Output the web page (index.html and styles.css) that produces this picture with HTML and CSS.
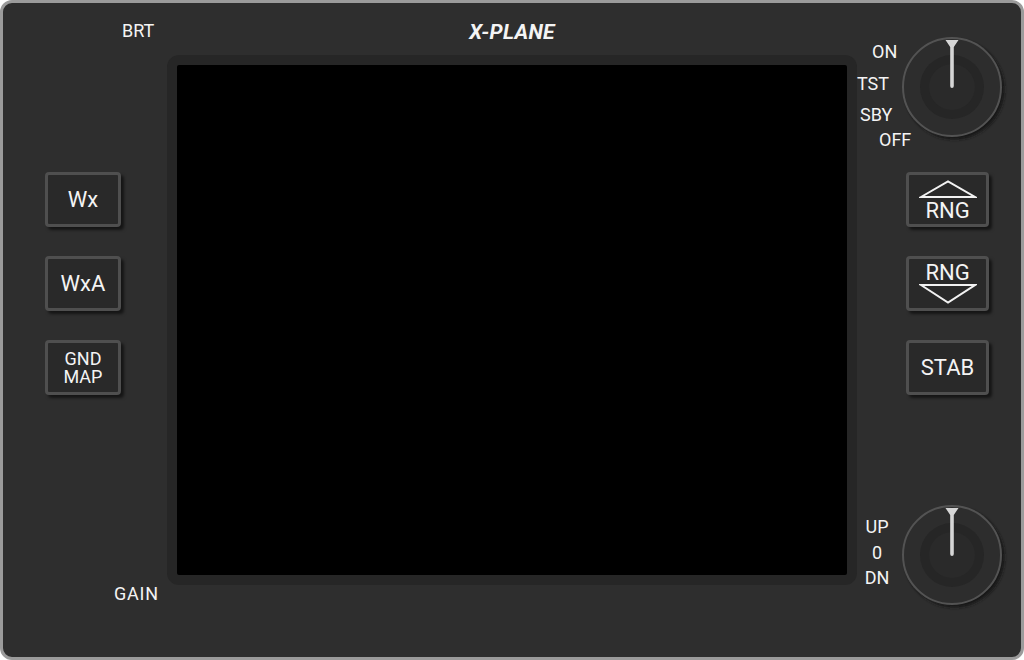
FILE: index.html
```html
<!DOCTYPE html>
<html>
<head>
<meta charset="utf-8">
<title>X-Plane Weather Radar</title>
<link rel="stylesheet" href="styles.css">
</head>
<body>
<div class="panel">
  <div class="col-left">
    <div class="label brt">BRT</div>
    <div class="btn-stack stack-left">
      <div class="btn">Wx</div>
      <div class="btn">WxA</div>
      <div class="btn btn-two"><span>GND</span><span>MAP</span></div>
    </div>
    <div class="label gain">GAIN</div>
  </div>

  <div class="col-center">
    <div class="title">X-PLANE</div>
    <div class="bezel"><div class="screen"></div></div>
  </div>

  <div class="col-right">
    <div class="knob-row">
      <div class="mode-labels">
        <div class="label l-on">ON</div>
        <div class="label l-tst">TST</div>
        <div class="label l-sby">SBY</div>
        <div class="label l-off">OFF</div>
      </div>
      <svg class="knob" viewBox="0 0 106 106" width="106" height="106">
        <defs><filter id="ks" x="-20%" y="-20%" width="140%" height="140%"><feGaussianBlur stdDeviation="1.5"/></filter></defs>
        <circle cx="52.5" cy="52.5" r="50" fill="#141414" filter="url(#ks)"/>
        <circle cx="50" cy="50" r="49" fill="#2d2d2d" stroke="#535353" stroke-width="2"/>
        <circle cx="50" cy="50" r="32" fill="#262626"/>
        <circle cx="50" cy="50" r="23" fill="#2a2a2a"/>
        <path d="M43.5 3 H56.5 L51.8 10 V49 Q51.8 51 50 51 Q48.2 51 48.2 49 V10 Z" fill="#d6d6d6"/>
      </svg>
    </div>

    <div class="btn-stack stack-right">
      <div class="btn btn-rng rng-up">
        <svg class="tri" viewBox="0 0 58 18" width="58" height="18"><polygon points="2,17 29,1.5 56,17" fill="none" stroke="#f2f2f2" stroke-width="2"/></svg>
        <span class="rng-text">RNG</span>
      </div>
      <div class="btn btn-rng rng-down">
        <span class="rng-text">RNG</span>
        <svg class="tri" viewBox="0 0 58 20" width="58" height="20"><polygon points="2,1 29,18.5 56,1" fill="none" stroke="#f2f2f2" stroke-width="2"/></svg>
      </div>
      <div class="btn">STAB</div>
    </div>

    <div class="knob-row tilt-row">
      <div class="tilt-labels">
        <div class="label">UP</div>
        <div class="label">0</div>
        <div class="label">DN</div>
      </div>
      <svg class="knob" viewBox="0 0 106 106" width="106" height="106">
        <defs><filter id="ks2" x="-20%" y="-20%" width="140%" height="140%"><feGaussianBlur stdDeviation="1.5"/></filter></defs>
        <circle cx="52.5" cy="52.5" r="50" fill="#141414" filter="url(#ks2)"/>
        <circle cx="50" cy="50" r="49" fill="#2d2d2d" stroke="#535353" stroke-width="2"/>
        <circle cx="50" cy="50" r="32" fill="#262626"/>
        <circle cx="50" cy="50" r="23" fill="#2a2a2a"/>
        <path d="M43.5 3 H56.5 L51.8 10 V49 Q51.8 51 50 51 Q48.2 51 48.2 49 V10 Z" fill="#d6d6d6"/>
      </svg>
    </div>
  </div>
</div>
</body>
</html>
```

FILE: styles.css
```css
html, body {
  margin: 0;
  padding: 0;
  background: #ffffff;
}

.panel {
  box-sizing: border-box;
  width: 1024px;
  height: 660px;
  border: 3px solid #9b9b9b;
  border-radius: 12px;
  background: #2e2e2e;
  display: flex;
  font-family: Roboto, "Liberation Sans", sans-serif;
  font-weight: 400;
  color: #f4f4f4;
  overflow: hidden;
}

.label {
  font-size: 18px;
  line-height: 18px;
  white-space: nowrap;
}

/* left column */
.col-left {
  box-sizing: border-box;
  width: 164px;
  flex-shrink: 0;
  display: flex;
  flex-direction: column;
  padding-top: 19px;
  padding-bottom: 54px;
}

.brt {
  padding-left: 119px;
}

.gain {
  margin-top: auto;
  padding-left: 111px;
  letter-spacing: 0.8px;
}

.btn-stack {
  display: flex;
  flex-direction: column;
  gap: 29px;
}

.stack-left {
  margin-top: 132px;
  padding-left: 42px;
}

.btn {
  box-sizing: border-box;
  width: 76px;
  height: 55px;
  border: 3px solid #4f4f4f;
  border-radius: 4px;
  background: #292929;
  box-shadow: 3px 3px 3px rgba(0, 0, 0, 0.55);
  display: flex;
  align-items: center;
  justify-content: center;
  font-size: 22px;
  line-height: 22px;
  white-space: nowrap;
}

.btn-two {
  flex-direction: column;
  font-size: 18px;
  line-height: 18px;
}

/* center column */
.col-center {
  box-sizing: border-box;
  width: 690px;
  flex-shrink: 0;
  padding-top: 19px;
}

.title {
  font-style: italic;
  font-weight: 700;
  font-size: 21px;
  line-height: 21px;
  text-align: center;
  letter-spacing: 0.3px;
}

.bezel {
  box-sizing: border-box;
  margin-top: 12px;
  height: 530px;
  padding: 10px;
  border-radius: 12px;
  background: #262626;
}

.screen {
  height: 100%;
  background: #000000;
  border-radius: 2px;
}

/* right column */
.col-right {
  box-sizing: border-box;
  width: 164px;
  flex-shrink: 0;
  padding-top: 34px;
}

.knob-row {
  display: flex;
  align-items: flex-start;
  height: 100px;
}

.knob {
  flex-shrink: 0;
  display: block;
}

.mode-labels {
  width: 45px;
  flex-shrink: 0;
  display: flex;
  flex-direction: column;
}

.l-on  { margin-top: 6px;  padding-left: 15px; }
.l-tst { margin-top: 14px; padding-left: 0; }
.l-sby { margin-top: 13px; padding-left: 3px; }
.l-off { margin-top: 7px;  padding-left: 22px; }

.stack-right {
  margin-top: 35px;
  padding-left: 49px;
}

.stack-right .btn {
  width: 83px;
}

.btn-rng {
  flex-direction: column;
  justify-content: flex-start;
}

.rng-up {
  padding-top: 5px;
}

.rng-up .rng-text {
  margin-top: 2px;
}

.rng-down {
  padding-top: 3px;
}

.tri {
  display: block;
}

.rng-text {
  display: block;
  line-height: 22px;
}

.tilt-row {
  margin-top: 110px;
}

.tilt-labels {
  width: 40px;
  margin-right: 5px;
  flex-shrink: 0;
  display: flex;
  flex-direction: column;
  align-items: center;
  gap: 7.5px;
  padding-top: 13px;
}
```
